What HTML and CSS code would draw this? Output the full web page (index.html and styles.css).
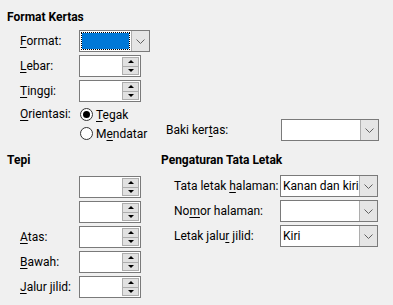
FILE: index.html
```html
<!DOCTYPE html>
<html lang="id">
<head>
    <meta charset="UTF-8">
    <title>Format Kertas</title>
    <link rel="stylesheet" href="styles.css">
</head>
<body>
    <div class="dialog">
        <div class="judul">Format Kertas</div>
        <div class="baris-grup">
            <div class="baris">
                <span class="label"><u>F</u>ormat:</span>
                <div class="combo combo-kecil">
                    <span class="isi fokus"><span class="biru"></span></span>
                    <span class="panah"><svg width="9" height="5" viewBox="0 0 9 5"><path d="M0.5 0.5 L4.5 4.5 L8.5 0.5" fill="none" stroke="#606060"/></svg></span>
                </div>
            </div>
            <div class="baris">
                <span class="label"><u>L</u>ebar:</span>
                <div class="spin"><div class="tombol"><span class="naik"></span><span class="turun"></span></div></div>
            </div>
            <div class="baris">
                <span class="label"><u>T</u>inggi:</span>
                <div class="spin"><div class="tombol"><span class="naik"></span><span class="turun"></span></div></div>
            </div>
            <div class="baris orientasi">
                <span class="label"><u>O</u>rientasi:</span>
                <div class="radio-grup">
                    <div class="radio"><span class="bulat pilih"></span><span><u>T</u>egak</span></div>
                    <div class="radio"><span class="bulat"></span><span>M<u>e</u>ndatar</span></div>
                </div>
                <div class="baki">
                    <span class="label-baki">Baki ker<u>t</u>as:</span>
                    <div class="combo">
                        <span class="isi"></span>
                        <span class="panah"><svg width="9" height="5" viewBox="0 0 9 5"><path d="M0.5 0.5 L4.5 4.5 L8.5 0.5" fill="none" stroke="#606060"/></svg></span>
                    </div>
                </div>
            </div>
        </div>

        <div class="bawah">
            <div class="kolom-tepi">
                <div class="judul">Tepi</div>
                <div class="baris-grup rapat">
                    <div class="baris"><span class="label"></span><div class="spin"><div class="tombol"><span class="naik"></span><span class="turun"></span></div></div></div>
                    <div class="baris"><span class="label"></span><div class="spin"><div class="tombol"><span class="naik"></span><span class="turun"></span></div></div></div>
                    <div class="baris"><span class="label"><u>A</u>tas:</span><div class="spin"><div class="tombol"><span class="naik"></span><span class="turun"></span></div></div></div>
                    <div class="baris"><span class="label"><u>B</u>awah:</span><div class="spin"><div class="tombol"><span class="naik"></span><span class="turun"></span></div></div></div>
                    <div class="baris"><span class="label"><u>J</u>alur jilid:</span><div class="spin"><div class="tombol"><span class="naik"></span><span class="turun"></span></div></div></div>
                </div>
            </div>
            <div class="kolom-tata">
                <div class="judul">Pengaturan Tata Letak</div>
                <div class="baris-grup rapat">
                    <div class="baris">
                        <span class="label-lebar">Tata letak <u>h</u>alaman:</span>
                        <div class="combo">
                            <span class="isi teks">Kanan dan kiri</span>
                            <span class="panah"><svg width="9" height="5" viewBox="0 0 9 5"><path d="M0.5 0.5 L4.5 4.5 L8.5 0.5" fill="none" stroke="#606060"/></svg></span>
                        </div>
                    </div>
                    <div class="baris">
                        <span class="label-lebar">No<u>m</u>or halaman:</span>
                        <div class="combo">
                            <span class="isi"></span>
                            <span class="panah"><svg width="9" height="5" viewBox="0 0 9 5"><path d="M0.5 0.5 L4.5 4.5 L8.5 0.5" fill="none" stroke="#606060"/></svg></span>
                        </div>
                    </div>
                    <div class="baris">
                        <span class="label-lebar">Letak jalu<u>r</u> jilid:</span>
                        <div class="combo">
                            <span class="isi teks">Kiri</span>
                            <span class="panah"><svg width="9" height="5" viewBox="0 0 9 5"><path d="M0.5 0.5 L4.5 4.5 L8.5 0.5" fill="none" stroke="#606060"/></svg></span>
                        </div>
                    </div>
                </div>
            </div>
        </div>
    </div>
</body>
</html>
```

FILE: styles.css
```css
body {
    margin: 0;
    background: #f0f0f0;
    font-family: Roboto, "Noto Sans", sans-serif;
    font-size: 12px;
    line-height: 16px;
    color: #000;
}
u {
    text-decoration-thickness: 1px;
    text-underline-offset: 2px;
}
.dialog {
    padding: 9px 0 0 7px;
}
.judul {
    font-weight: bold;
    height: 16px;
    white-space: nowrap;
}
.baris-grup {
    display: flex;
    flex-direction: column;
    gap: 3px;
    margin-top: 5px;
    padding-left: 13px;
}
.baris-grup.rapat {
    margin-top: 8px;
}
.baris {
    display: flex;
    align-items: center;
    height: 22px;
}
.label {
    width: 59px;
    flex-shrink: 0;
    white-space: nowrap;
}
.label-lebar {
    width: 106px;
    flex-shrink: 0;
    white-space: nowrap;
}

/* kotak angka */
.spin {
    width: 62px;
    height: 22px;
    box-sizing: border-box;
    border: 1px solid #7a7a7a;
    background: #fff;
    display: flex;
    justify-content: flex-end;
    padding: 1px 1px 1px 0;
}
.tombol {
    width: 17px;
    display: flex;
    flex-direction: column;
}
.tombol span {
    flex: 1;
    background: #e1e1e1;
    border: 1px solid #adadad;
    display: flex;
    align-items: center;
    justify-content: center;
}
.tombol span + span {
    border-top: none;
}
.naik::after {
    content: "";
    border-left: 3px solid transparent;
    border-right: 3px solid transparent;
    border-bottom: 3px solid #000;
}
.turun::after {
    content: "";
    border-left: 3px solid transparent;
    border-right: 3px solid transparent;
    border-top: 3px solid #000;
}

/* kotak pilihan */
.combo {
    width: 98px;
    height: 22px;
    box-sizing: border-box;
    border: 1px solid #7a7a7a;
    background: #fff;
    display: flex;
}
.combo-kecil {
    width: 71px;
}
.isi {
    flex: 1;
    min-width: 0;
    padding-left: 2px;
    line-height: 20px;
    white-space: nowrap;
}
.isi.fokus {
    padding: 1px;
    display: flex;
}
.biru {
    flex: 1;
    background: #0078d7;
    background-clip: padding-box;
    border: 1px dotted #000;
}
.panah {
    width: 17px;
    flex-shrink: 0;
    background: #e5e5e5;
    border-left: 1px solid #adadad;
    display: flex;
    align-items: center;
    justify-content: center;
}

/* orientasi */
.baris.orientasi {
    height: 38px;
    align-items: flex-start;
}
.orientasi .label {
    line-height: 19px;
}
.radio-grup {
    width: 87px;
    display: flex;
    flex-direction: column;
}
.radio {
    display: flex;
    align-items: center;
    height: 19px;
    gap: 3px;
    padding-left: 1px;
    white-space: nowrap;
}
.bulat {
    width: 13px;
    height: 13px;
    box-sizing: border-box;
    border: 1px solid #333;
    border-radius: 50%;
    background: #fff;
    display: flex;
    align-items: center;
    justify-content: center;
}
.bulat.pilih::after {
    content: "";
    width: 7px;
    height: 7px;
    border-radius: 50%;
    background: #000;
}
.baki {
    display: flex;
    align-items: center;
    margin-top: 14px;
}
.label-baki {
    width: 115px;
    white-space: nowrap;
}

/* bagian bawah */
.bawah {
    display: flex;
    margin-top: 9px;
}
.kolom-tepi {
    width: 154px;
}
.kolom-tata .baris-grup {
    margin-top: 7px;
}
```
